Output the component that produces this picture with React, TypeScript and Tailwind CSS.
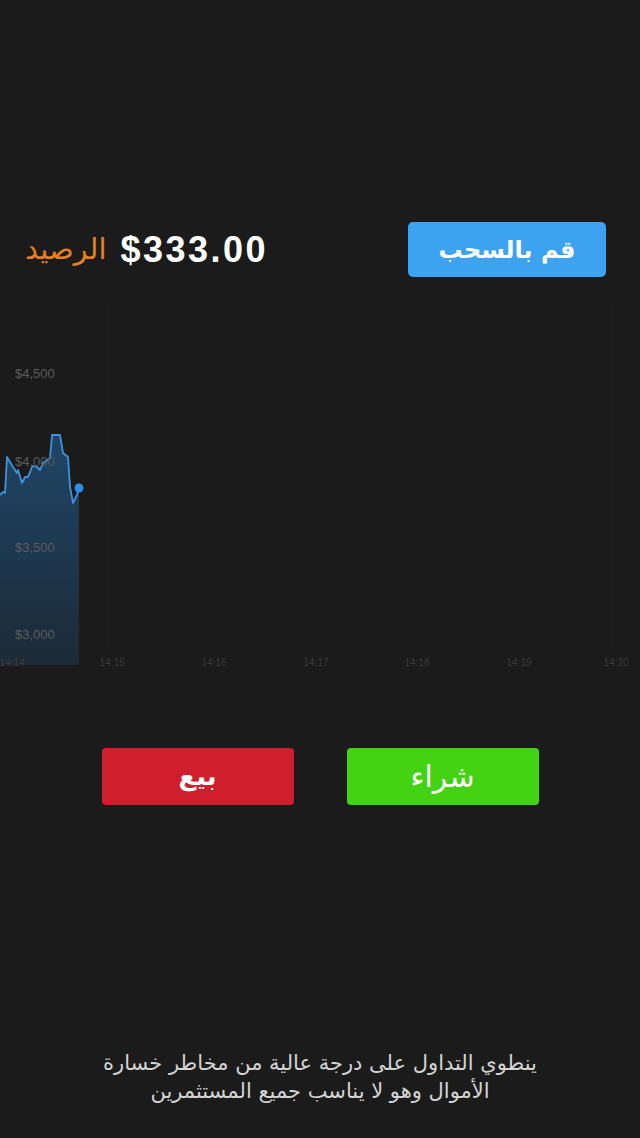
const line: [number, number][] = [
  [0, 495], [3, 492], [5, 493], [7, 457], [13, 467], [17, 473], [18, 470],
  [22, 483], [25, 477], [28, 477], [32, 467], [33, 466], [37, 467], [40, 470],
  [43, 463], [50, 458], [52, 435], [60, 435], [63, 453], [68, 457], [70, 487],
  [73, 503], [77, 495], [79, 488],
];

const TOP = 300;
const yTicks = [
  { label: '$4,500', y: 373 },
  { label: '$4,000', y: 461 },
  { label: '$3,500', y: 547 },
  { label: '$3,000', y: 634 },
];
const xTicks = [
  { label: '14:14', x: 12 },
  { label: '14:15', x: 112 },
  { label: '14:16', x: 214 },
  { label: '14:17', x: 316 },
  { label: '14:18', x: 417 },
  { label: '14:19', x: 519 },
  { label: '14:20', x: 616 },
];

const Chart = () => {
  const pts = line.map(([x, y]) => `${x},${y - TOP}`).join(' ');
  const area = `M0,${365} L${pts.split(' ').join(' L')} L79,365 Z`;
  return (
    <svg width="640" height="380" viewBox="0 0 640 380" className="block">
      <defs>
        <linearGradient id="fill" x1="0" y1="0" x2="0" y2="1">
          <stop offset="0" stopColor="#1f4668" />
          <stop offset="1" stopColor="#1c2a36" />
        </linearGradient>
      </defs>
      {xTicks.map((t) => (
        <line key={t.label} x1={t.x - 4} y1="0" x2={t.x - 4} y2="350" stroke="#1f1f1f" strokeWidth="1" />
      ))}
      {yTicks.map((t) => (
        <line key={t.label} x1="0" y1={t.y - TOP + 14} x2="640" y2={t.y - TOP + 14} stroke="#1f1f1f" strokeWidth="1" />
      ))}
      <path d={area} fill="url(#fill)" />
      <polyline points={pts} fill="none" stroke="#3f93dc" strokeWidth="1.8" strokeLinejoin="round" />
      <circle cx="79" cy={488 - TOP} r="4.5" fill="#2f8fe8" />
      {yTicks.map((t) => (
        <text
          key={t.label}
          x="15"
          y={t.y - TOP + 5}
          fill="#5c5c5c"
          fontSize="13"
          fontFamily="'Liberation Sans', Arial, sans-serif"
        >
          {t.label}
        </text>
      ))}
      {xTicks.map((t) => (
        <text
          key={t.label}
          x={t.x}
          y={366}
          fill="#3a3a3a"
          fontSize="10"
          textAnchor="middle"
          fontFamily="'Liberation Sans', Arial, sans-serif"
        >
          {t.label}
        </text>
      ))}
    </svg>
  );
};

const App = () => (
  <div className="w-[640px] h-[1138px] bg-[#1b1b1b] flex flex-col overflow-hidden">
    <div className="flex items-center justify-between pt-[222px] pl-[25px] pr-[34px]">
      <div className="flex items-center gap-[14px]">
        <span
          dir="rtl"
          className="text-[#e8801f] text-[29px] leading-none font-['DejaVu_Sans',sans-serif]"
        >
          الرصيد
        </span>
        <span className="text-white text-[36px] leading-none font-bold tracking-[2.5px] font-['Liberation_Sans',Arial,sans-serif]">
          $333.00
        </span>
      </div>
      <button
        dir="rtl"
        className="w-[198px] h-[55px] rounded-[5px] bg-[#3da2ef] text-white text-[24px] font-bold font-['DejaVu_Sans',sans-serif]"
      >
        قم بالسحب
      </button>
    </div>

    <div className="mt-[23px]">
      <Chart />
    </div>

    <div className="flex justify-center gap-[53px] mt-[68px]">
      <button
        dir="rtl"
        className="w-[192px] h-[57px] rounded-[4px] bg-[#cf1f2e] text-white text-[26px] font-bold font-['DejaVu_Sans',sans-serif]"
      >
        بيع
      </button>
      <button
        dir="rtl"
        className="w-[192px] h-[57px] rounded-[4px] bg-[#43d313] text-white text-[30px] font-['DejaVu_Sans',sans-serif]"
      >
        شراء
      </button>
    </div>

    <div className="flex-1" />

    <p
      dir="rtl"
      className="text-center text-[#d4d4d4] text-[21px] leading-[28px] mb-[33px] font-['DejaVu_Sans',sans-serif]"
    >
      ينطوي التداول على درجة عالية من مخاطر خسارة
      <br />
      الأموال وهو لا يناسب جميع المستثمرين
    </p>
  </div>
);

export default App;
